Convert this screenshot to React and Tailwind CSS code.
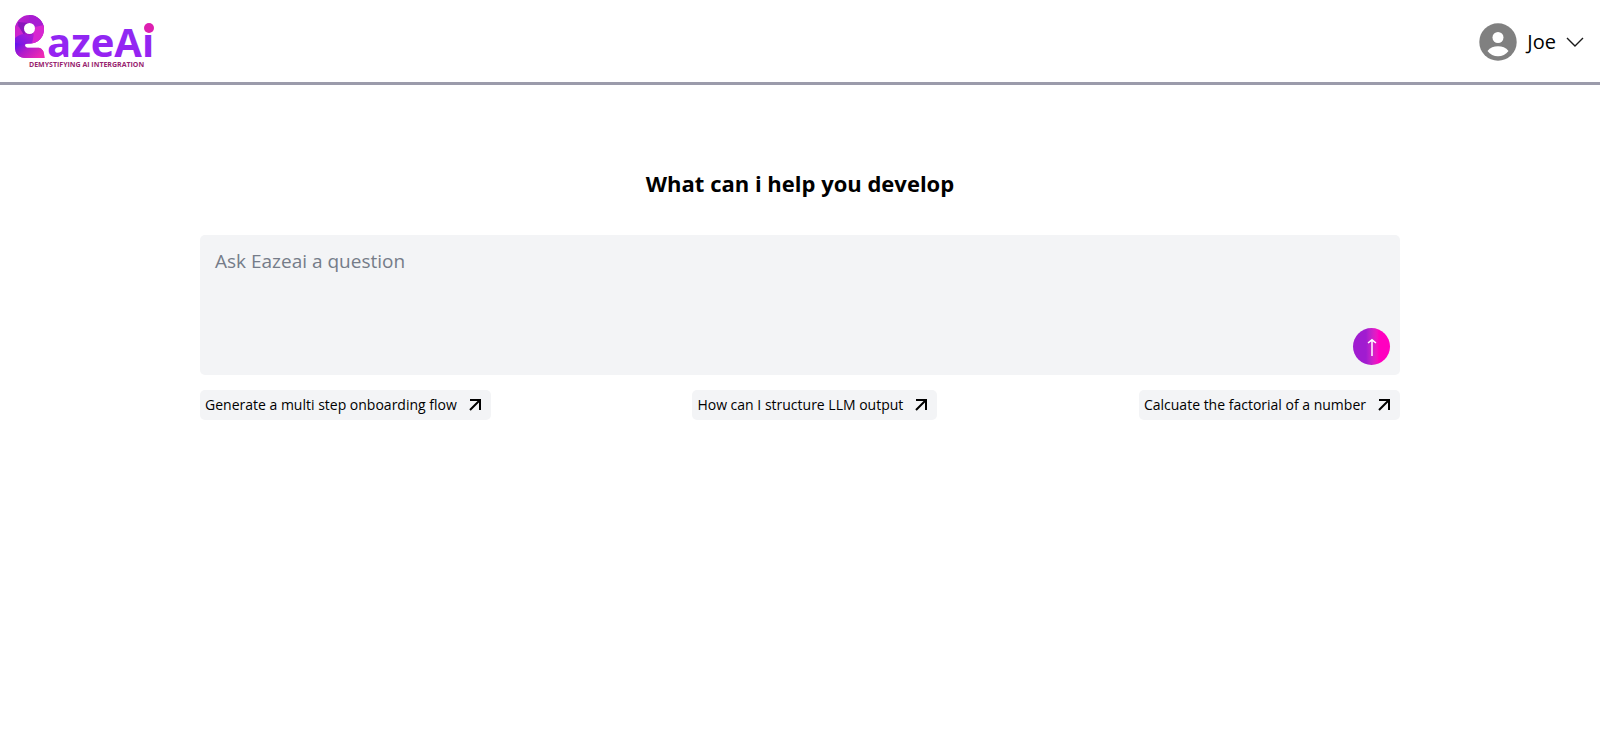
import { useState } from "react";

const FONT = "font-['Segoe_UI','Open_Sans',sans-serif]";

const suggestions = [
  "Generate a multi step onboarding flow",
  "How can I structure LLM output",
  "Calcuate the factorial of a number",
];

function Logo() {
  return (
    <svg width="140" height="54" viewBox="0 0 140 54" role="img" aria-label="EazeAi">
      <defs>
        <clipPath id="mark">
          <path d="M0 14.500A14.500 14.500 0 0 1 29 14.500A14 14 0 0 1 15 28.500H12.500Q10 28.500 10 30.600Q10 32.800 12.500 32.800H24Q29 33.500 29.500 43H11Q0 42.500 0 32Z" />
        </clipPath>
        <linearGradient id="ring" x1="0" y1="0" x2="1" y2="1">
          <stop offset="0" stopColor="#c022d2" />
          <stop offset="0.5" stopColor="#a018c8" />
          <stop offset="1" stopColor="#e226c8" />
        </linearGradient>
        <linearGradient id="tail" x1="0" y1="0" x2="1" y2="0.6">
          <stop offset="0" stopColor="#5a12f0" />
          <stop offset="0.45" stopColor="#b01ccb" />
          <stop offset="1" stopColor="#ee2bb4" />
        </linearGradient>
        <linearGradient id="fold" x1="0" y1="1" x2="1" y2="0">
          <stop offset="0" stopColor="#6414ec" />
          <stop offset="1" stopColor="#b41fd4" />
        </linearGradient>
        <linearGradient id="word" x1="0" y1="0" x2="0" y2="1">
          <stop offset="0" stopColor="#8a2cf5" />
          <stop offset="1" stopColor="#9a1ff0" />
        </linearGradient>
      </defs>
      {/* e mark */}
      <g clipPath="url(#mark)">
        <rect width="30" height="44" fill="url(#ring)" />
        <path d="M3 7L14 8L9 20L4 17Z" fill="#8a16bc" />
        <path d="M0 10L4 12L9 20L0 26Z" fill="#cc24cc" />
        <path d="M14 0H29V13L20 13L14 8Z" fill="#a81bd2" />
        <path d="M20 12L29 10V29H10L18 19Z" fill="#d826d0" />
        <path d="M0 23Q5 19 9 19Q14 22 19 19L17 28.500L10 29L9 31L0 34Z" fill="url(#fold)" />
        <path d="M0 28L10 30L12 32.500H30V44H0Z" fill="url(#tail)" />
      </g>
      <circle cx="14.500" cy="13.500" r="5.500" fill="#fff" />
      <text x="32" y="42" fontFamily="Open Sans, sans-serif" fontWeight="700" fontSize="40" fill="url(#word)">azeAi</text>
      <rect x="127" y="6" width="13" height="13" fill="#fff" />
      <circle cx="134" cy="13" r="5" fill="#dd1fb0" />
      <text x="14" y="52" fontFamily="Open Sans, sans-serif" fontWeight="700" fontSize="7" fill="#98246f">DEMYSTIFYING AI INTERGRATION</text>
    </svg>
  );
}

function ArrowUpRight() {
  return (
    <svg width="12" height="12" viewBox="0 0 12 12" fill="none" stroke="#000" strokeWidth="2" aria-hidden="true">
      <path d="M1 1h10v10M11 1L1 11" />
    </svg>
  );
}

function Header() {
  return (
    <header className="flex h-[85px] items-center justify-between border-b-3 border-[#9b9bab] pt-0.5 pr-4 pl-[15px]">
      <a href="#">
        <Logo />
      </a>
      <button className="flex cursor-pointer items-center gap-2.5 text-xl">
        <svg width="38" height="38" viewBox="0 0 38 38" aria-hidden="true">
          <circle cx="19" cy="19" r="18.700" fill="#808080" />
          <circle cx="19" cy="14.500" r="5.500" fill="#fff" />
          <path d="M8.500 28C11 24.500 15 23.200 19 23.200S27 24.500 29.500 28C27 31.500 23 33.300 19 33.300S11 31.500 8.500 28Z" fill="#fff" />
        </svg>
        Joe
        <svg width="18" height="10" viewBox="0 0 18 10" fill="none" stroke="#1a1a1a" strokeWidth="1.400" aria-hidden="true">
          <path d="M1 1l8 8 8-8" />
        </svg>
      </button>
    </header>
  );
}

export default function App() {
  const [question, setQuestion] = useState("");

  return (
    <div className={`min-h-screen bg-white text-black ${FONT}`}>
      <Header />
      <main className="mx-auto w-3/4 pt-20">
        <h1 className="mb-[34px] text-center text-[22px] leading-9 font-bold">What can i help you develop</h1>
        <form className="relative" onSubmit={e => e.preventDefault()}>
          <textarea
            aria-label="Ask Eazeai a question"
            placeholder="Ask Eazeai a question"
            value={question}
            onChange={e => setQuestion(e.target.value)}
            className="block h-[140px] w-full resize-none rounded-[5px] bg-[#f3f4f6] px-[15px] py-3 text-[19px] leading-7 outline-none placeholder:text-[#757c89]"
          />
          <button
            type="submit"
            aria-label="Send"
            className="absolute right-2.5 bottom-2.5 flex size-[37px] cursor-pointer items-center justify-center rounded-full bg-linear-to-r from-[#a01cd0] from-35% to-[#ff00c0] to-70%"
          >
            <svg width="10" height="18" viewBox="0 0 10 18" fill="none" stroke="#fff" strokeWidth="1.500" aria-hidden="true">
              <path d="M5 18V2M1 5L5 1.800l4 3.200" />
            </svg>
          </button>
        </form>
        <div className="mt-[15px] flex justify-between">
          {suggestions.map(text => (
            <button
              key={text}
              onClick={() => setQuestion(text)}
              className="flex h-[30px] cursor-pointer items-center gap-3 rounded-[5px] bg-[#f3f4f6] pr-2.5 pl-[5px] text-sm"
            >
              {text}
              <ArrowUpRight />
            </button>
          ))}
        </div>
      </main>
    </div>
  );
}
